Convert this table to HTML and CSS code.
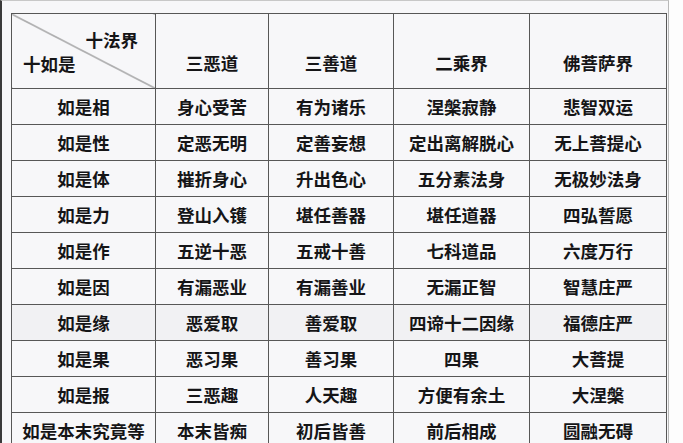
FILE: index.html
```html
<!DOCTYPE html>
<html lang="zh-CN">
<head>
<meta charset="utf-8">
<title>十如是 十法界</title>
<link rel="stylesheet" href="styles.css">
</head>
<body>
<div class="page">
  <table class="grid">
    <colgroup>
      <col class="c1"><col class="c2"><col class="c3"><col class="c4"><col class="c5">
    </colgroup>
    <thead>
      <tr class="head">
        <th class="diag">
          <div class="diag-inner">
            <span class="diag-top">十法界</span>
            <span class="diag-bottom">十如是</span>
          </div>
        </th>
        <th>三恶道</th>
        <th>三善道</th>
        <th>二乘界</th>
        <th>佛菩萨界</th>
      </tr>
    </thead>
    <tbody>
      <tr><td>如是相</td><td>身心受苦</td><td>有为诸乐</td><td>涅槃寂静</td><td>悲智双运</td></tr>
      <tr><td>如是性</td><td>定恶无明</td><td>定善妄想</td><td>定出离解脱心</td><td>无上菩提心</td></tr>
      <tr><td>如是体</td><td>摧折身心</td><td>升出色心</td><td>五分素法身</td><td>无极妙法身</td></tr>
      <tr><td>如是力</td><td>登山入镬</td><td>堪任善器</td><td>堪任道器</td><td>四弘誓愿</td></tr>
      <tr><td>如是作</td><td>五逆十恶</td><td>五戒十善</td><td>七科道品</td><td>六度万行</td></tr>
      <tr><td>如是因</td><td>有漏恶业</td><td>有漏善业</td><td>无漏正智</td><td>智慧庄严</td></tr>
      <tr class="shade"><td>如是缘</td><td>恶爱取</td><td>善爱取</td><td>四谛十二因缘</td><td>福德庄严</td></tr>
      <tr><td>如是果</td><td>恶习果</td><td>善习果</td><td>四果</td><td>大菩提</td></tr>
      <tr><td>如是报</td><td>三恶趣</td><td>人天趣</td><td>方便有余土</td><td>大涅槃</td></tr>
      <tr><td>如是本末究竟等</td><td>本末皆痴</td><td>初后皆善</td><td>前后相成</td><td>圆融无碍</td></tr>
    </tbody>
  </table>
</div>
</body>
</html>
```

FILE: styles.css
```css
html, body {
  margin: 0;
  padding: 0;
  background: #fdfdfd;
}

body {
  font-family: "Noto Sans CJK SC", "Noto Sans", sans-serif;
  color: #151517;
}

.page {
  box-sizing: border-box;
  width: 669px;
  height: 443px;
  overflow: hidden;
  background: #f7f7f9;
  border-left: 2px solid #3a3a3a;
  border-right: 1px solid #b8b8b8;
  border-top: 1px solid #c8c8c8;
  padding: 12px 0 0 9px;
}

.grid {
  border-collapse: collapse;
  table-layout: fixed;
  width: 656px;
  font-size: 17.5px;
  font-weight: 700;
  line-height: 20px;
}

.c1 { width: 144px; }
.c2 { width: 113px; }
.c3 { width: 125px; }
.c4 { width: 136px; }
.c5 { width: 137px; }

.grid th,
.grid td {
  border: 1px solid #575757;
  text-align: center;
  padding: 0;
  white-space: nowrap;
  font-weight: 700;
}

.grid tbody tr {
  height: 36px;
}

.grid td {
  vertical-align: middle;
}

.head {
  height: 74px;
}

.head th {
  vertical-align: bottom;
  padding-bottom: 15px;
}

.head th.diag {
  padding: 0;
  vertical-align: top;
  background: linear-gradient(to top right,
    transparent calc(50% - 0.8px),
    #5e5e5e 50%,
    transparent calc(50% + 0.8px));
}

.diag-inner {
  box-sizing: border-box;
  height: 74px;
  display: flex;
  flex-direction: column;
  justify-content: space-between;
  padding: 16px 17px 14px 11px;
}

.diag-top {
  align-self: flex-end;
}

.diag-bottom {
  align-self: flex-start;
}

.shade td {
  background: #f1f1f3;
}
```
